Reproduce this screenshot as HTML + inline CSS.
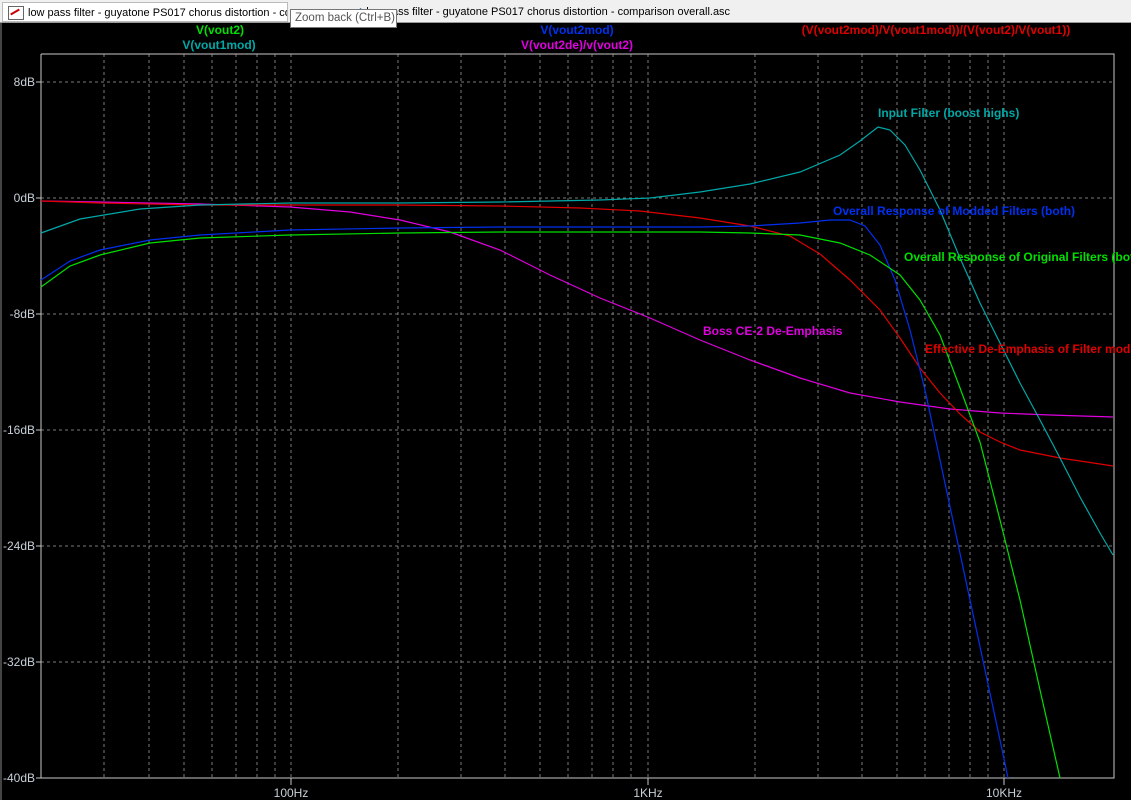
<!DOCTYPE html>
<html><head><style>
body{margin:0;width:1131px;height:800px;overflow:hidden;background:#000;font-family:"Liberation Sans",sans-serif;}
#tabs{position:absolute;left:0;top:0;width:1131px;height:22px;background:#f0f0f0;border-bottom:1px solid #999;z-index:2;}
.tab{position:absolute;top:2px;height:20px;font-size:11px;line-height:20px;color:#000;white-space:nowrap;overflow:hidden;box-sizing:border-box;}
#tip{position:absolute;left:290px;top:9px;width:107px;height:19px;background:#fff;border:1px solid #767676;font-size:11.5px;line-height:17px;color:#555;padding-left:4px;box-sizing:border-box;white-space:nowrap;z-index:3;}
svg{position:absolute;left:0;top:0;z-index:1}
</style></head><body>
<div id="tabs">
<div class="tab" style="left:2px;width:286px;background:#fff;border:1px solid #bbb;"><span style="display:inline-block;width:14px;height:12px;border:1px solid #666;background:#fff;vertical-align:middle;margin:0 4px 0 5px;position:relative;"><span style="position:absolute;left:1px;top:4px;width:10px;height:2px;background:#c00;transform:rotate(-30deg)"></span></span>low pass filter - guyatone PS017 chorus distortion - comparison overall</div>
<div class="tab" style="left:350px;width:400px;padding-left:4px;"><span style="color:#0050c0">✓</span> low pass filter - guyatone PS017 chorus distortion - comparison overall.asc</div>
</div>
<div id="tip">Zoom back (Ctrl+B)</div>
<svg width="1131" height="800" viewBox="0 0 1131 800">
<rect x="0" y="23" width="1131" height="777" fill="#000"/>
<line x1="1" y1="23" x2="1" y2="800" stroke="#888"/>
<g stroke="#7a7a7a" stroke-dasharray="3,3" stroke-width="1">
<line x1="41" y1="82" x2="1113" y2="82"/><line x1="41" y1="198" x2="1113" y2="198"/><line x1="41" y1="314" x2="1113" y2="314"/><line x1="41" y1="430" x2="1113" y2="430"/><line x1="41" y1="546" x2="1113" y2="546"/><line x1="41" y1="662" x2="1113" y2="662"/>
<line x1="104" y1="54" x2="104" y2="778"/><line x1="149" y1="54" x2="149" y2="778"/><line x1="184" y1="54" x2="184" y2="778"/><line x1="212" y1="54" x2="212" y2="778"/><line x1="236" y1="54" x2="236" y2="778"/><line x1="257" y1="54" x2="257" y2="778"/><line x1="275" y1="54" x2="275" y2="778"/><line x1="291" y1="54" x2="291" y2="778"/>
<line x1="398" y1="54" x2="398" y2="778"/><line x1="461" y1="54" x2="461" y2="778"/><line x1="505" y1="54" x2="505" y2="778"/><line x1="540" y1="54" x2="540" y2="778"/><line x1="568" y1="54" x2="568" y2="778"/><line x1="592" y1="54" x2="592" y2="778"/><line x1="613" y1="54" x2="613" y2="778"/><line x1="631" y1="54" x2="631" y2="778"/><line x1="648" y1="54" x2="648" y2="778"/>
<line x1="755" y1="54" x2="755" y2="778"/><line x1="818" y1="54" x2="818" y2="778"/><line x1="862" y1="54" x2="862" y2="778"/><line x1="897" y1="54" x2="897" y2="778"/><line x1="925" y1="54" x2="925" y2="778"/><line x1="949" y1="54" x2="949" y2="778"/><line x1="970" y1="54" x2="970" y2="778"/><line x1="988" y1="54" x2="988" y2="778"/><line x1="1004" y1="54" x2="1004" y2="778"/>
</g>
<g stroke="#c8c8c8" fill="none">
<polyline points="41,54 1114,54 1114,778 41,778 41,54"/>
<line x1="36" y1="82" x2="41" y2="82"/><line x1="36" y1="198" x2="41" y2="198"/><line x1="36" y1="314" x2="41" y2="314"/><line x1="36" y1="430" x2="41" y2="430"/><line x1="36" y1="546" x2="41" y2="546"/><line x1="36" y1="662" x2="41" y2="662"/><line x1="36" y1="778" x2="41" y2="778"/>
<line x1="291" y1="778" x2="291" y2="785"/><line x1="648" y1="778" x2="648" y2="785"/><line x1="1004" y1="778" x2="1004" y2="785"/>
</g>
<g fill="#c8d0d8" font-size="12" text-anchor="end">
<text x="35" y="86">8dB</text><text x="35" y="202">0dB</text><text x="35" y="318">-8dB</text><text x="35" y="434">-16dB</text><text x="35" y="550">-24dB</text><text x="35" y="666">-32dB</text><text x="35" y="782">-40dB</text>
</g>
<g fill="#c8d0d8" font-size="12" text-anchor="middle">
<text x="291" y="797">100Hz</text><text x="648" y="797">1KHz</text><text x="1004" y="797">10KHz</text>
</g>
<g fill="none" stroke-width="1.2">
<polyline stroke="#e000e0" points="41,201 100,202 200,204 290,207 350,212 400,220 450,232 500,250 550,275 600,298 650,318 700,340 750,360 800,378 850,393 900,402 950,409 1000,413 1050,415 1113,417"/>
<polyline stroke="#e00000" points="41,201 100,203 200,205 300,205 400,205 500,206 580,208 640,211 700,218 750,226 790,236 820,254 850,280 880,310 900,338 920,368 940,393 960,414 980,432 1000,442 1020,450 1060,458 1100,464 1113,466"/>
<polyline stroke="#00a8a8" points="41,233 80,219 140,209 200,205 290,203 400,203 500,202 600,200 650,198 700,192 750,184 800,172 840,155 860,141 878,127 890,130 905,145 920,170 940,210 960,258 980,303 1000,343 1020,383 1040,420 1060,458 1080,497 1100,533 1113,555"/>
<polyline stroke="#0030f0" points="41,280 70,261 100,250 150,240 200,235 290,230 400,228 500,227 600,227 700,227 750,226 800,223 830,220 850,220 865,226 880,245 895,280 910,330 925,390 940,460 955,530 970,600 985,670 1000,740 1008,778"/>
<polyline stroke="#00e000" points="41,287 70,266 100,255 150,243 200,238 290,235 400,233 500,232 600,232 700,232 750,233 800,235 840,243 870,255 900,275 920,300 940,335 960,388 980,442 1000,520 1020,600 1040,690 1060,778"/>
</g>
<g font-size="12" font-weight="bold">
<text x="220" y="34" fill="#00e000" text-anchor="middle">V(vout2)</text>
<text x="219" y="49" fill="#00a8a8" text-anchor="middle">V(vout1mod)</text>
<text x="577" y="34" fill="#0030f0" text-anchor="middle">V(vout2mod)</text>
<text x="577" y="49" fill="#e000e0" text-anchor="middle">V(vout2de)/v(vout2)</text>
<text x="936" y="34" fill="#e00000" text-anchor="middle">(V(vout2mod)/V(vout1mod))/(V(vout2)/V(vout1))</text>
<text x="878" y="117" fill="#00a8a8">Input Filter (boost highs)</text>
<text x="833" y="215" fill="#0030f0">Overall Response of Modded Filters (both)</text>
<text x="904" y="261" fill="#00e000">Overall Response of Original Filters (both)</text>
<text x="703" y="335" fill="#e000e0">Boss CE-2 De-Emphasis</text>
<text x="925" y="353" fill="#e00000">Effective De-Emphasis of Filter mod</text>
</g>
</svg>
</body></html>
